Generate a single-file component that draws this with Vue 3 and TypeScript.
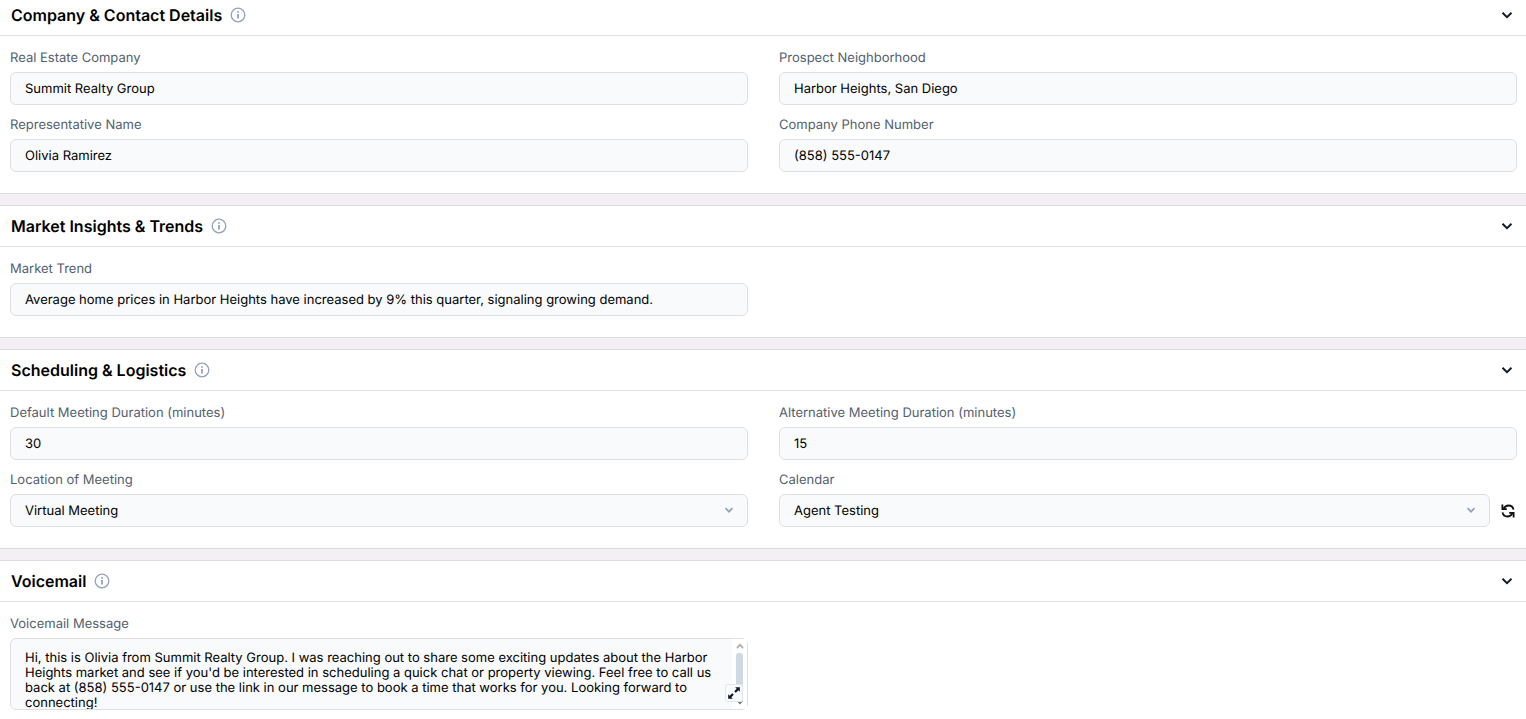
<script setup lang="ts">
import { ref } from 'vue'

interface Field {
  id: string
  label: string
  kind: 'text' | 'select' | 'textarea'
  value: string
  refresh?: boolean
}

interface Section {
  title: string
  fields: Field[]
}

const sections = ref<Section[]>([
  {
    title: 'Company & Contact Details',
    fields: [
      { id: 'company', label: 'Real Estate Company', kind: 'text', value: 'Summit Realty Group' },
      { id: 'neighborhood', label: 'Prospect Neighborhood', kind: 'text', value: 'Harbor Heights, San Diego' },
      { id: 'representative', label: 'Representative Name', kind: 'text', value: 'Olivia Ramirez' },
      { id: 'phone', label: 'Company Phone Number', kind: 'text', value: '(858) 555-0147' },
    ],
  },
  {
    title: 'Market Insights & Trends',
    fields: [
      {
        id: 'trend',
        label: 'Market Trend',
        kind: 'text',
        value: 'Average home prices in Harbor Heights have increased by 9% this quarter, signaling growing demand.',
      },
    ],
  },
  {
    title: 'Scheduling & Logistics',
    fields: [
      { id: 'duration', label: 'Default Meeting Duration (minutes)', kind: 'text', value: '30' },
      { id: 'alt-duration', label: 'Alternative Meeting Duration (minutes)', kind: 'text', value: '15' },
      { id: 'location', label: 'Location of Meeting', kind: 'select', value: 'Virtual Meeting' },
      { id: 'calendar', label: 'Calendar', kind: 'select', value: 'Agent Testing', refresh: true },
    ],
  },
  {
    title: 'Voicemail',
    fields: [
      {
        id: 'voicemail',
        label: 'Voicemail Message',
        kind: 'textarea',
        value:
          "Hi, this is Olivia from Summit Realty Group. I was reaching out to share some exciting updates about the Harbor Heights market and see if you'd be interested in scheduling a quick chat or property viewing. Feel free to call us back at (858) 555-0147 or use the link in our message to book a time that works for you. Looking forward to connecting!",
      },
    ],
  },
])
</script>

<template>
  <main class="page">
    <section v-for="section in sections" :key="section.title" class="section">
      <header class="head">
        <h2 class="title">{{ section.title }}</h2>
        <svg class="info" viewBox="0 0 16 16" aria-hidden="true">
          <circle cx="8" cy="8" r="6.8" fill="none" stroke="currentColor" stroke-width="1.3" />
          <path d="M7.1 4.2h1.8v1.6H7.1zM7.1 6.9h1.8v4.7H7.1z" fill="currentColor" />
        </svg>
        <button class="toggle" type="button" :aria-label="`Collapse ${section.title}`">
          <svg viewBox="0 0 12 12" aria-hidden="true">
            <path d="M1.5 3.8 6 8.2l4.5-4.4" fill="none" stroke="currentColor" stroke-width="1.9" />
          </svg>
        </button>
      </header>
      <div class="grid">
        <div v-for="field in section.fields" :key="field.id" class="field">
          <label class="label" :for="field.id">{{ field.label }}</label>
          <input v-if="field.kind === 'text'" :id="field.id" v-model="field.value" class="control" type="text" />
          <div v-else-if="field.kind === 'select'" class="row">
            <div class="select-wrap">
              <select :id="field.id" v-model="field.value" class="control">
                <option>{{ field.value }}</option>
              </select>
              <svg class="caret" viewBox="0 0 10 10" aria-hidden="true">
                <path d="M1.5 3.2 5 6.7l3.5-3.5" fill="none" stroke="currentColor" stroke-width="1.7" />
              </svg>
            </div>
            <button v-if="field.refresh" class="refresh" type="button" aria-label="Refresh calendars">
              <svg viewBox="0 0 14 14" fill="none" stroke="currentColor" stroke-width="1.8" aria-hidden="true">
                <path d="M1.4 .5v4.7h4.4" />
                <path d="M2.5 4.8C4 2.3 5.500 1.5 7.500 1.5c2.700 0 4.500 1.600 5 4.200" />
                <path d="M12.600 13.500V8.800H8.200" />
                <path d="M11.500 9.200c-1.500 2.500-3 3.300-5 3.300C3.800 12.500 2 10.900 1.500 8.300" />
              </svg>
            </button>
          </div>
          <div v-else class="area-wrap">
            <textarea :id="field.id" v-model="field.value" class="area"></textarea>
            <div class="scroll" aria-hidden="true">
              <svg class="arrow" viewBox="0 0 8 6"><path d="M1 5l3-3.2L7 5" fill="none" stroke="#b5b5b5" stroke-width="2" /></svg>
              <span class="thumb"></span>
              <svg class="arrow" viewBox="0 0 8 6"><path d="M1 1h6L4 4.5z" fill="#6f6f6f" /></svg>
            </div>
            <button class="expand" type="button" aria-label="Expand message">
              <svg viewBox="0 0 12 12" aria-hidden="true">
                <path d="M7 1h4v4L9.7 3.7 7.6 5.8 6.200 4.400l2.100-2.100zM5 11H1V7l1.300 1.300 2.100-2.100 1.400 1.400-2.100 2.100z" fill="currentColor" />
              </svg>
            </button>
          </div>
        </div>
      </div>
    </section>
  </main>
</template>

<style>
body {
  margin: 0;
  overflow: hidden;
}
</style>

<style scoped>
.page {
  box-sizing: border-box;
  display: flex;
  flex-direction: column;
  gap: 11px;
  height: 100vh;
  overflow: hidden;
  background: #f3eff5;
  color: #000;
  font: 13px/18px Inter, "Liberation Sans", sans-serif;
  text-rendering: geometricPrecision;
}
.section {
  flex: none;
  background: #fff;
  border-top: 1px solid #dcdcdf;
  border-bottom: 1px solid #dcdcdf;
}
.section:first-child {
  margin-top: -6px;
}
.head {
  display: flex;
  align-items: center;
  height: 40px;
  padding: 0 10px 0 11px;
  border-bottom: 1px solid #e2e3e6;
}
.title {
  margin: 0;
  font-size: 16px;
  line-height: 24px;
  font-weight: 600;
}
.info {
  width: 16px;
  height: 16px;
  margin-left: 8px;
  color: #94a3b8;
}
button {
  display: flex;
  align-items: center;
  justify-content: center;
  padding: 0;
  border: 0;
  background: none;
  color: #0f172a;
}
.toggle {
  width: 18px;
  height: 18px;
  margin-left: auto;
}
.toggle svg {
  width: 12px;
  height: 12px;
}
.grid {
  display: grid;
  grid-template-columns: 1fr 1fr;
  gap: 11px 31px;
  padding: 13px 9px 21px 10px;
}
.field {
  display: flex;
  flex-direction: column;
  gap: 5px;
  min-width: 0;
}
.label {
  color: #52606f;
}
.control,
.area {
  box-sizing: border-box;
  width: 100%;
  margin: 0;
  border: 1px solid #dedfe2;
  border-radius: 6px;
  outline: 0;
  background: #f8fafc;
  color: #000;
  font: inherit;
  text-rendering: inherit;
  appearance: none;
}
.control {
  height: 33px;
  padding: 0 14px;
}
.row {
  display: flex;
  align-items: center;
  gap: 9px;
}
.select-wrap {
  position: relative;
  display: flex;
  flex: 1;
}
.caret {
  position: absolute;
  top: 11px;
  right: 14px;
  width: 10px;
  height: 10px;
  color: #94a3b8;
  pointer-events: none;
}
.refresh {
  width: 18px;
  height: 18px;
  color: #111;
}
.refresh svg {
  width: 14px;
  height: 14px;
}
.area-wrap {
  position: relative;
  display: flex;
}
.area {
  height: 72px;
  padding: 12px 24px 0 14px;
  overflow: hidden;
  line-height: 15px;
  resize: none;
}
.scroll {
  position: absolute;
  top: 1px;
  right: 1px;
  bottom: 1px;
  display: flex;
  flex-direction: column;
  align-items: center;
  gap: 4px;
  width: 15px;
  padding: 4px 0 3px;
  box-sizing: border-box;
  background: #fff;
}
.arrow {
  width: 8px;
  height: 6px;
}
.thumb {
  flex: 1;
  width: 7px;
  border-radius: 3px;
  background: #cfd9e3;
}
.expand {
  position: absolute;
  right: 5px;
  bottom: 8px;
  box-sizing: border-box;
  width: 18px;
  height: 18px;
  border: 1px solid #e2e8f0;
  border-radius: 2px;
  background: #f8fafc;
}
.expand svg {
  flex: none;
  width: 14px;
  height: 14px;
}
</style>
